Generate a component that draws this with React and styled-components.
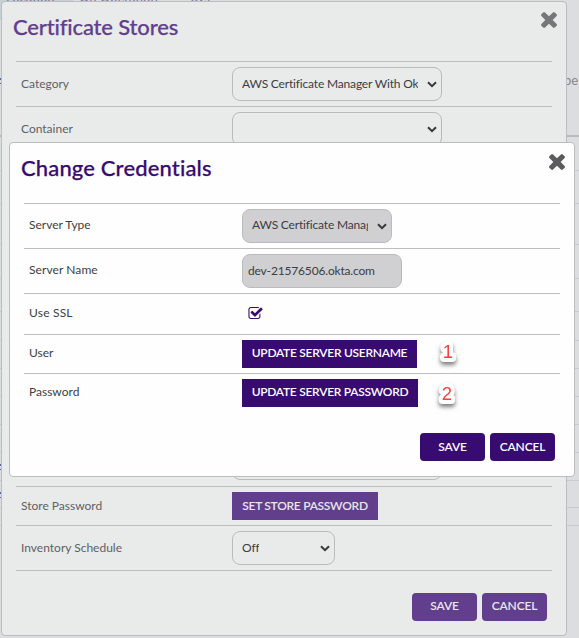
import React from 'react';
import styled, { createGlobalStyle, css } from 'styled-components';

const Global = createGlobalStyle`
  *, *::before, *::after { box-sizing: border-box; }
  body { margin: 0; overflow: hidden; background: #dcdddf; }
`;

const Screen = styled.div`
  position: relative;
  width: 579px;
  height: 638px;
  overflow: hidden;
  background: #dcdddf;
  font-family: Lato, sans-serif;
  font-variant-ligatures: none;
  font-size: 12px;
  font-weight: 400;
  color: #45454b;
`;

const GridLine = styled.div`
  position: absolute;
  left: 0;
  right: 0;
  top: ${(p) => p.$y}px;
  height: ${(p) => (p.$strong ? 2 : 1)}px;
  background: ${(p) => (p.$strong ? '#b9babc' : '#cacbce')};
`;

const LinkEdge = styled.div`
  position: absolute;
  left: 0;
  top: ${(p) => p.$y}px;
  width: 1px;
  height: 6px;
  border: solid #5b68a8;
  border-width: 2px 0 1px;
`;

const GridText = styled.span`
  position: absolute;
  left: ${(p) => p.$x}px;
  top: ${(p) => p.$y}px;
  font-size: 13px;
  line-height: 16px;
  color: ${(p) => p.$color || '#88898b'};
  white-space: nowrap;
`;

const HeadCell = styled.div`
  position: absolute;
  left: 0;
  top: 0;
  width: 73px;
  height: 20px;
  background: #c8ced6;
`;

const Dialog = styled.section`
  position: absolute;
  left: ${(p) => p.$x}px;
  top: ${(p) => p.$y}px;
  width: 566px;
  height: ${(p) => p.$h}px;
  display: flex;
  flex-direction: column;
  padding: 0 14px ${(p) => p.$pb}px;
  border: 1px solid #bbbdbe;
  border-radius: 4px;
  background: ${(p) => (p.$muted ? '#e9ebea' : '#fefefe')};
  color: ${(p) => (p.$muted ? '#606165' : '#404044')};
`;

const Header = styled.header`
  display: flex;
  justify-content: space-between;
  height: ${(p) => p.$h}px;
  margin: 0 -5px 0 -3px;
  padding-top: 10px;
`;

const Title = styled.h2`
  margin: 0;
  font: 500 22px/30px Lato, sans-serif;
  font-variant-ligatures: none;
  letter-spacing: ${(p) => p.$track}px;
  color: ${(p) => (p.$muted ? '#613f8c' : '#380b70')};
  -webkit-text-stroke: 0.25px currentColor;
`;

const Close = styled.button`
  width: 17px;
  height: 17px;
  margin-top: ${(p) => (p.$muted ? -0.5 : 0.5)}px;
  padding: 0;
  border: 0;
  background: none;
  line-height: 0;
  color: ${(p) => (p.$muted ? '#757779' : '#5b5b5d')};
`;

const Rows = styled.div`
  display: flex;
  flex-direction: column;
  border-top: 1px solid #bbbdbe;
  border-bottom: ${(p) => (p.$closed ? '1px solid #bbbdbe' : '0')};
`;

const Row = styled.div`
  display: flex;
  align-items: flex-start;
  height: ${(p) => p.$h}px;
  padding: 5px 0 0 5px;
  & + & { border-top: 1px solid #bbbdbe; }
`;

const Label = styled.span`
  width: ${(p) => p.$w}px;
  flex: none;
  line-height: ${(p) => p.$lh}px;
  letter-spacing: ${(p) => p.$track || 0}px;
`;

const fieldBox = css`
  display: flex;
  align-items: center;
  width: ${(p) => p.$w}px;
  height: 34px;
  border: 1px solid #b9bbbd;
  border-radius: 8px;
  background: ${(p) => (p.$disabled ? '#d0d0d2' : 'transparent')};
  color: #3c3c42;
  white-space: nowrap;
`;

const SelectBox = styled.div`
  ${fieldBox}
  justify-content: space-between;
  padding: 0 4px 0 9px;
`;

const SelectValue = styled.span`
  max-width: ${(p) => p.$clip}px;
  margin-bottom: ${(p) => (p.$lift ? 2 : 0)}px;
  overflow: hidden;
  line-height: 16px;
  letter-spacing: -0.17px;
`;

const InputBox = styled.div`
  ${fieldBox}
  padding: 0 0 2px 5px;
  letter-spacing: -0.17px;
`;

const Button = styled.button`
  display: flex;
  align-items: center;
  justify-content: center;
  width: ${(p) => p.$w}px;
  height: 28px;
  padding: 0 0 ${(p) => (p.$lift ? 2 : 0)}px;
  border: 0;
  border-radius: ${(p) => (p.$round ? 4 : 0)}px;
  background: ${(p) => (p.$muted ? '#613f8c' : '#380b70')};
  color: ${(p) => (p.$muted ? '#e9e6ec' : '#fff')};
  font: 600 12px/16px Lato, sans-serif;
  letter-spacing: ${(p) => (p.$round ? -0.15 : -0.28)}px;
  white-space: nowrap;
`;

const Footer = styled.footer`
  display: flex;
  justify-content: flex-end;
  gap: 5px;
  margin: auto 5px 0 0;
`;

const CheckWrap = styled.span`
  display: flex;
  padding: 8px 0 0 6px;
  color: #380b70;
`;

const Spacer = styled.div`
  height: 290px;
  border-top: 1px solid #bbbdbe;
`;

const CalloutMark = styled.svg`
  position: absolute;
  left: ${(p) => p.$x}px;
  top: ${(p) => p.$y}px;
  overflow: visible;
  filter: drop-shadow(0 3px 2px rgba(0, 0, 0, 0.5));
  text {
    font: 400 18.5px "Liberation Sans", sans-serif;
    text-anchor: middle;
    stroke-linejoin: round;
  }
`;

const Callout = ({ x, y, children }) => (
  <CalloutMark $x={x} $y={y} width="22" height="26" viewBox="0 0 22 26">
    <text x="11" y="19" fill="#f4403e" stroke="#fff" strokeWidth="8" paintOrder="stroke">{children}</text>
  </CalloutMark>
);

const Chevron = () => (
  <svg width="10" height="7" viewBox="0 0 10 7" fill="none">
    <path d="M1 1.2 5 5.2 9 1.2" stroke="#38383b" strokeWidth="2" />
  </svg>
);

const CloseIcon = () => (
  <svg width="16" height="16" viewBox="302 366 1188 1188" fill="currentColor">
    <path d="M1490 1322q0 40-28 68l-136 136q-28 28-68 28t-68-28l-294-294-294 294q-28 28-68 28t-68-28l-136-136q-28-28-28-68t28-68l294-294-294-294q-28-28-28-68t28-68l136-136q28-28 68-28t68 28l294 294 294-294q28-28 68-28t68 28l136 136q28 28 28 68t-28 68l-294 294 294 294q28 28 28 68z" />
  </svg>
);

const CheckIcon = () => (
  <svg width="15" height="12" viewBox="64 128 1663 1408" fill="currentColor">
    <path d="M1472 930v318q0 119-84.5 203.5t-203.5 84.5h-832q-119 0-203.5-84.5t-84.5-203.5v-832q0-119 84.5-203.5t203.5-84.5h832q63 0 117 25 15 7 18 23 3 17-9 29l-49 49q-10 10-23 10-3 0-9-2-23-6-45-6h-832q-66 0-113 47t-47 113v832q0 66 47 113t113 47h832q66 0 113-47t47-113v-254q0-13 9-22l64-64q10-10 23-10 6 0 12 3 20 8 20 29zm231-489l-814 814q-24 24-57 24t-57-24l-430-430q-24-24-24-57t24-57l110-110q24-24 57-24t57 24l263 263 647-647q24-24 57-24t57 24l110 110q24 24 24 57t-24 57z" />
  </svg>
);

const Select = ({ width, clip, disabled, children }) => (
  <SelectBox $w={width} $disabled={disabled}>
    <SelectValue $clip={clip} $lift={disabled}>{children}</SelectValue>
    <Chevron />
  </SelectBox>
);

const lines = [170, 203, 244, 278, 311, 340, 368, 396, 424, 452, 480, 507];
const linkEdges = [78, 464, 492];

export default function App() {
  return (
    <Screen>
      <Global />
      <HeadCell />
      <GridText $x={6} $y={-11} $color="#7d6f9a">Location</GridText>
      <GridText $x={79} $y={-11} $color="#7d6f9a">On Operation</GridText>
      <GridText $x={191} $y={-11} $color="#7d6f9a">Sys</GridText>
      <GridText $x={564} $y={72}>pe</GridText>
      <GridLine $y={135} $strong />
      {lines.map((y) => <GridLine key={y} $y={y} />)}
      <GridLine $y={525} />
      {linkEdges.map((y) => <LinkEdge key={y} $y={y} />)}

      <Dialog $x={1} $y={1} $h={635} $pb={14} $muted>
        <Header $h={59}>
          <Title $track={-0.15} $muted>Certificate Stores</Title>
          <Close $muted aria-label="Close"><CloseIcon /></Close>
        </Header>
        <Rows $closed>
          <Row $h={44}>
            <Label $w={211} $lh={34}>Category</Label>
            <Select width={210} clip={177}>AWS Certificate Manager With Ok</Select>
          </Row>
          <Row $h={45}>
            <Label $w={211} $lh={34}>Container</Label>
            <Select width={210} />
          </Row>
          <Spacer />
          <Row $h={45}>
            <Label $w={211} $lh={34} />
            <InputBox $w={210} />
          </Row>
          <Row $h={39}>
            <Label $w={211} $lh={28}>Store Password</Label>
            <Button $w={146} $muted>SET STORE PASSWORD</Button>
          </Row>
          <Row $h={45}>
            <Label $w={211} $lh={34}>Inventory Schedule</Label>
            <Select width={103}>Off</Select>
          </Row>
        </Rows>
        <Footer>
          <Button $w={65} $round $lift $muted>SAVE</Button>
          <Button $w={65} $round $lift $muted>CANCEL</Button>
        </Footer>
      </Dialog>

      <Dialog $x={9} $y={142} $h={335} $pb={15}>
        <Header $h={60}>
          <Title $track={0.15}>Change Credentials</Title>
          <Close aria-label="Close"><CloseIcon /></Close>
        </Header>
        <Rows>
          <Row $h={44}>
            <Label $w={213} $lh={32}>Server Type</Label>
            <Select width={150} clip={116} disabled>AWS Certificate Manager</Select>
          </Row>
          <Row $h={45}>
            <Label $w={213} $lh={32} $track={0.08}>Server Name</Label>
            <InputBox $w={160} $disabled>dev-21576506.okta.com</InputBox>
          </Row>
          <Row $h={41}>
            <Label $w={213} $lh={28} $track={0.2}>Use SSL</Label>
            <CheckWrap><CheckIcon /></CheckWrap>
          </Row>
          <Row $h={39}>
            <Label $w={213} $lh={26}>User</Label>
            <Button $w={175} $lift>UPDATE SERVER USERNAME</Button>
          </Row>
          <Row $h={39}>
            <Label $w={213} $lh={26}>Password</Label>
            <Button $w={176} $lift>UPDATE SERVER PASSWORD</Button>
          </Row>
        </Rows>
        <Footer>
          <Button $w={65} $round>SAVE</Button>
          <Button $w={65} $round>CANCEL</Button>
        </Footer>
      </Dialog>

      <Callout x={437} y={339}>1</Callout>
      <Callout x={436} y={381}>2</Callout>
    </Screen>
  );
}
